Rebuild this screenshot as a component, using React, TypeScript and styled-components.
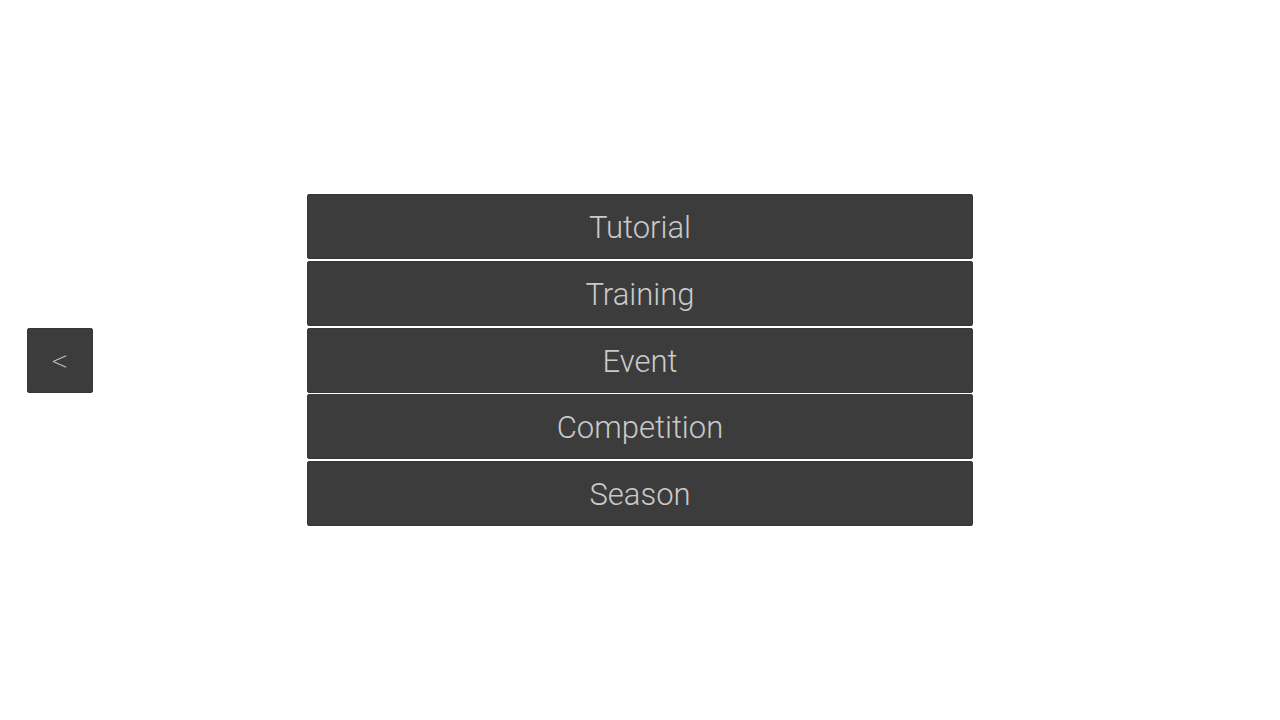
import React from 'react';
import styled, { createGlobalStyle } from 'styled-components';

const GlobalStyle = createGlobalStyle`
    html, body {
        margin: 0;
        padding: 0;
        background-color: #ffffff;
    }

    #root {
        height: 100vh;
    }
`;

const MENU_ITEMS = ['Tutorial', 'Training', 'Event', 'Competition', 'Season'];

export default function App(): JSX.Element {
    return (
        <>
            <GlobalStyle />
            <Page>
                <BackColumn>
                    <BackButton type="button">&lt;</BackButton>
                </BackColumn>
                <Menu>
                    {MENU_ITEMS.map(item => (
                        <MenuButton key={item} type="button">{item}</MenuButton>
                    ))}
                </Menu>
            </Page>
        </>
    );
}

// ============================== Layout ==============================

const Page = styled.div`
    display: grid;
    grid-template-columns: 307px 666px 1fr;
    align-items: center;

    width: 100%;
    height: 100%;
`;

const BackColumn = styled.div`
    display: flex;
    flex-direction: row;
    justify-content: flex-start;

    padding-left: 27px;
`;

const Menu = styled.div`
    display: flex;
    flex-direction: column;
    gap: 1.6px;

    width: 100%;
`;

// ============================== Buttons ==============================

const BaseButton = styled.button`
    display: flex;
    justify-content: center;
    align-items: center;

    height: 65px;
    padding: 2px 0 0 0;
    box-sizing: border-box;

    background-color: #3c3c3c;
    border: 1px solid #363636;
    border-radius: 2px;

    color: #cacaca;
    font-family: Roboto, "Liberation Sans", sans-serif;
    font-weight: 300;
    cursor: pointer;
`;

const MenuButton = styled(BaseButton)`
    width: 100%;
    font-size: 31px;
`;

const BackButton = styled(BaseButton)`
    width: 66px;
    font-size: 32px;
    font-weight: 100;
`;
